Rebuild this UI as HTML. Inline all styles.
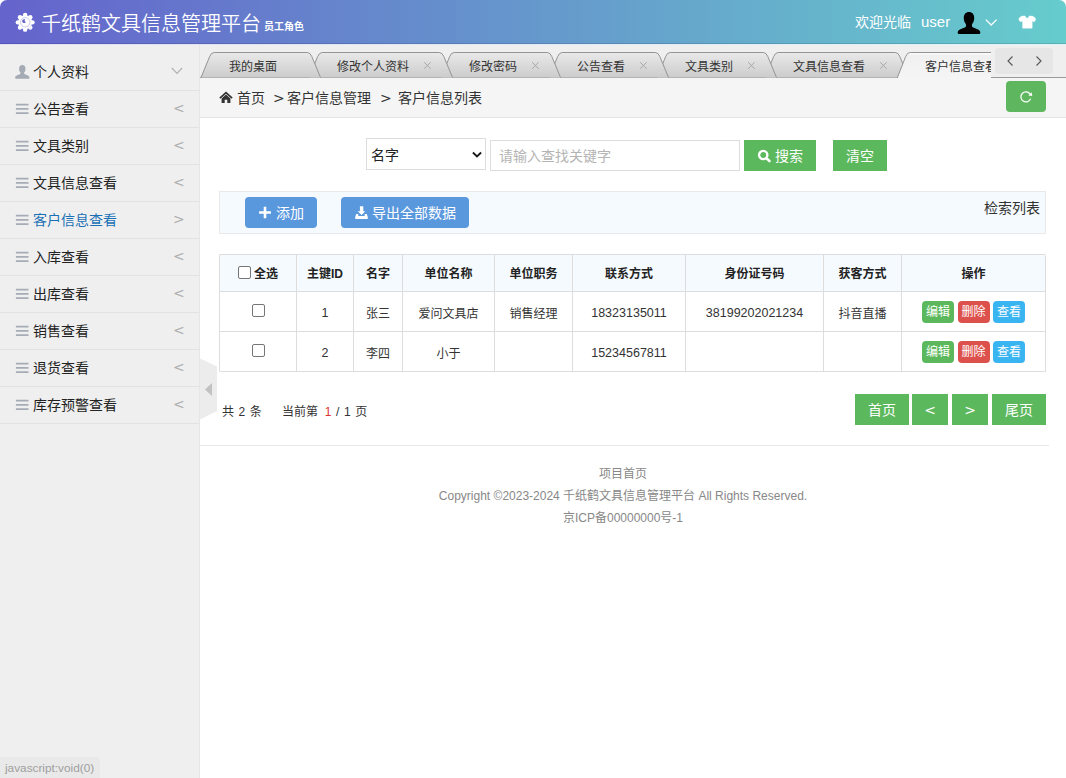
<!DOCTYPE html>
<html lang="zh-CN">
<head>
<meta charset="utf-8">
<title>千纸鹤文具信息管理平台</title>
<style>
*{box-sizing:border-box;margin:0;padding:0}
html,body{width:1066px;height:778px;overflow:hidden;background:#fff}
body{font-family:"Liberation Sans","Noto Sans CJK SC",sans-serif;font-size:14px;color:#333;position:relative}
a{text-decoration:none;color:inherit}
.abs{position:absolute}

/* ---------- header ---------- */
#hd{position:absolute;left:0;top:0;width:1066px;height:44px;border-radius:7px 7px 0 0;box-shadow:inset 0 -1px 0 rgba(0,0,40,0.13);
 background:linear-gradient(90deg,#6563cc 0%,#66cccc 100%)}
#hd .logo{position:absolute;left:41px;top:9px;font-size:20px;line-height:30px;color:#fff;font-weight:350;white-space:nowrap}
#hd .role{position:absolute;left:264px;top:20px;font-size:10px;line-height:14px;color:#fff;font-weight:700;white-space:nowrap}
#hd .wel{position:absolute;left:855px;top:12px;font-size:14px;line-height:20px;color:#fff;white-space:nowrap}
#hd .usr{position:absolute;left:921px;top:12px;font-size:15px;line-height:20px;color:#fff;white-space:nowrap}
#hdline{position:absolute;left:0;top:44px;width:1066px;height:1px;background:linear-gradient(90deg,#e0e0f5 0%,#e0e3f5 25%,#e0eaf5 50%,#e0eff5 75%,#e0f5f5 100%)}

/* ---------- sidebar ---------- */
#side{position:absolute;left:0;top:45px;width:200px;height:733px;background:#efefef;border-right:1px solid #e6e6e6}
#side .it{position:absolute;left:0;width:199px;height:37px;border-bottom:1px solid #e2e2e2;font-size:14px;line-height:20px;color:#222}
#side .it span.t{position:absolute;left:33px;top:8px;white-space:nowrap}
#side .it.on span.t{color:#1a6fb5}
#side .it .ar{position:absolute;left:173px;top:7px;font-size:14px;color:#adadad;font-family:"DejaVu Sans",sans-serif;line-height:20px}
#side .it .bars{position:absolute;left:16px;top:13px;width:12px;height:10px}
#side .it .bars i{display:block;height:2px;background:#a9aeb5;margin-bottom:2px;width:12px}

/* ---------- tabs ---------- */
#tabs{position:absolute;left:200px;top:45px;width:866px;height:33px;background:#efefef}
#tabline{position:absolute;left:200px;top:77px;width:866px;height:1px;background:#9a9a9a}

/* ---------- breadcrumb ---------- */
#bc{position:absolute;left:200px;top:78px;width:866px;height:40px;background:#f5f5f5;border-bottom:1px solid #e5e5e5}
#bc .tx{position:absolute;top:10px;font-size:14px;line-height:20px;color:#333;white-space:nowrap}

.gbtn{position:absolute;background:#5cb85c;color:#fff;font-size:14px;text-align:center;white-space:nowrap}
.bbtn{position:absolute;background:#5a98de;color:#fff;font-size:14px;border-radius:4px;white-space:nowrap}

/* ---------- table ---------- */
#tb{position:absolute;left:219px;top:254px;width:827px;border-collapse:separate;border-spacing:0;table-layout:fixed;font-size:12px;color:#333;border-left:1px solid #ddd;border-top:1px solid #ddd}
#tb th,#tb td{border-right:1px solid #ddd;border-bottom:1px solid #ddd;text-align:center;vertical-align:middle;padding:0;white-space:nowrap}
#tb th{height:37px;background:#f5fafe;font-weight:700;color:#222}
#tb td{height:40px}
.ob{display:inline-block;width:32px;height:22px;line-height:22px;padding:0;font-size:12px;color:#fff;border-radius:4px;margin:0 1.75px;vertical-align:middle;text-align:center;position:relative;top:-0.5px}
.cb{display:inline-block;width:13px;height:13px;border:1px solid #767676;border-radius:2px;background:#fff;vertical-align:middle}

.ft{position:absolute;left:200px;width:846px;text-align:center;font-size:12px;color:#888;line-height:16px;white-space:nowrap}

.tt{position:absolute;top:58px;font-size:12px;line-height:18px;color:#333;white-space:nowrap}
.tx2{position:absolute;top:56px;font-size:15px;line-height:18px;color:#aaa;font-family:"Liberation Sans",sans-serif}
#navbox{position:absolute;left:995px;top:48px;width:58px;height:26px;background:#e6e6e6;border-radius:4px}
#bc .gt{font-family:"DejaVu Sans",sans-serif;font-size:14px}
#tb td.n{font-size:12.5px;padding-top:2px}
#tb td{padding-top:1px}
#tb th{padding-top:0;padding-bottom:1px}
#tb{border-radius:1.5px}
#tb tr.h th:first-child{border-top-left-radius:1.5px}
#tb tr.h th:last-child{border-top-right-radius:1.5px}
#tb tr:last-child td:first-child{border-bottom-left-radius:1.5px}
#tb tr:last-child td:last-child{border-bottom-right-radius:1.5px}
</style>
</head>
<body>

<!-- header -->
<div id="hd">
<svg class="abs" style="left:0;top:0" width="60" height="44" viewBox="0 0 60 44">
<circle cx="25.15" cy="22.35" r="7" fill="#fff"/><circle cx="25.15" cy="15.05" r="2.2" fill="#fff"/><circle cx="30.31" cy="17.19" r="2.2" fill="#fff"/><circle cx="32.45" cy="22.35" r="2.2" fill="#fff"/><circle cx="30.31" cy="27.51" r="2.2" fill="#fff"/><circle cx="25.15" cy="29.65" r="2.2" fill="#fff"/><circle cx="19.99" cy="27.51" r="2.2" fill="#fff"/><circle cx="17.85" cy="22.35" r="2.2" fill="#fff"/><circle cx="19.99" cy="17.19" r="2.2" fill="#fff"/>
<circle cx="25.25" cy="22.3" r="4.7" fill="none" stroke="#7b78cf" stroke-width="0.55" opacity="0.7"/>
<path d="M28.2,26.1 L31.6,29.4 M29.7,24.3 L33,27.5" stroke="#7b78cf" stroke-width="0.45" opacity="0.5" fill="none"/>
<path d="M22.2,20.4 Q23.2,18.9 25.2,19.4 L24.6,21 L25.8,22.4 Q24.2,23.5 22.7,22.4 Q22,21.5 22.2,20.4 Z" fill="#6563cc"/>
</svg>
<svg class="abs" style="left:955px;top:9px" width="28" height="28" viewBox="0 0 28 28"><path d="M14,3 C17.2,3 19.2,5.4 19.2,8.8 C19.2,11.4 18.4,13.8 17.2,15 C16.8,15.6 16.8,17.4 17.4,18 C18.6,19.2 24,20 25,22.2 C25.6,23.4 25.4,25 24.2,25 L3.8,25 C2.6,25 2.4,23.4 3,22.2 C4,20 9.4,19.2 10.6,18 C11.2,17.4 11.2,15.6 10.8,15 C9.6,13.8 8.8,11.4 8.8,8.8 C8.8,5.4 10.8,3 14,3 Z" fill="#000"/></svg>
<svg class="abs" style="left:984px;top:16.6px" width="14" height="10" viewBox="0 0 14 10"><path d="M1.8,2.6 L7.2,8 L12.6,2.6" fill="none" stroke="#fff" stroke-width="1.3"/></svg>
<svg class="abs" style="left:1018px;top:15px" width="19" height="14" viewBox="0 0 19 14"><path d="M7,0.9 Q9.1,5.5 11.3,0.9 L14.3,1.1 Q16.8,1.8 17.8,4.2 L16.3,6.9 L14.2,5.9 V13.2 H4.6 V5.9 L2.5,6.9 L0.6,4.2 Q1.6,1.8 4.1,1.1 Z" fill="#fff" stroke="#fff" stroke-width="0.4" stroke-linejoin="round"/></svg>
  <div class="logo">千纸鹤文具信息管理平台</div>
  <div class="role">员工角色</div>
  <div class="wel">欢迎光临</div>
  <div class="usr">user</div>
</div>
<div id="hdline"></div>

<!-- sidebar -->
<div id="side">
  <div class="it" style="top:9px"><svg class="abs" style="left:14px;top:9px" width="16.6" height="16.6" viewBox="0 0 16 16"><path d="M8,2 C10,2 11.1,3.5 11.1,5.5 C11.1,7 10.6,8.3 9.9,9 C9.6,9.4 9.7,10.2 10.1,10.5 C10.9,11.1 14,11.6 14.7,13 C15,13.8 14.9,15.2 14.3,15.2 L1.7,15.2 C1.1,15.2 1,13.8 1.3,13 C2,11.6 5.1,11.1 5.9,10.5 C6.3,10.2 6.4,9.4 6.1,9 C5.4,8.3 4.9,7 4.9,5.5 C4.9,3.5 6,2 8,2 Z" fill="#a5abb4"/></svg><svg class="abs" style="left:170px;top:12px" width="14" height="10" viewBox="0 0 14 10"><path d="M1.9,2 L7,7.4 L12.1,2" fill="none" stroke="#b2b2b2" stroke-width="1.15"/></svg><span class="t" style="top:8px">个人资料</span></div>
  <div class="it" style="top:46px"><svg class="abs" style="left:15px;top:12px" width="15" height="12" viewBox="0 0 15 12"><path d="M0.9,1.7 H13.5 M0.9,5.95 H13.5 M0.9,10.2 H13.5" stroke="#a6acb6" stroke-width="1.8" fill="none"/></svg><span class="t">公告查看</span><span class="ar">&lt;</span></div>
  <div class="it" style="top:83px"><svg class="abs" style="left:15px;top:12px" width="15" height="12" viewBox="0 0 15 12"><path d="M0.9,1.7 H13.5 M0.9,5.95 H13.5 M0.9,10.2 H13.5" stroke="#a6acb6" stroke-width="1.8" fill="none"/></svg><span class="t">文具类别</span><span class="ar">&lt;</span></div>
  <div class="it" style="top:120px"><svg class="abs" style="left:15px;top:12px" width="15" height="12" viewBox="0 0 15 12"><path d="M0.9,1.7 H13.5 M0.9,5.95 H13.5 M0.9,10.2 H13.5" stroke="#a6acb6" stroke-width="1.8" fill="none"/></svg><span class="t">文具信息查看</span><span class="ar">&lt;</span></div>
  <div class="it on" style="top:157px"><svg class="abs" style="left:15px;top:12px" width="15" height="12" viewBox="0 0 15 12"><path d="M0.9,1.7 H13.5 M0.9,5.95 H13.5 M0.9,10.2 H13.5" stroke="#a6acb6" stroke-width="1.8" fill="none"/></svg><span class="t">客户信息查看</span><span class="ar">&gt;</span></div>
  <div class="it" style="top:194px"><svg class="abs" style="left:15px;top:12px" width="15" height="12" viewBox="0 0 15 12"><path d="M0.9,1.7 H13.5 M0.9,5.95 H13.5 M0.9,10.2 H13.5" stroke="#a6acb6" stroke-width="1.8" fill="none"/></svg><span class="t">入库查看</span><span class="ar">&lt;</span></div>
  <div class="it" style="top:231px"><svg class="abs" style="left:15px;top:12px" width="15" height="12" viewBox="0 0 15 12"><path d="M0.9,1.7 H13.5 M0.9,5.95 H13.5 M0.9,10.2 H13.5" stroke="#a6acb6" stroke-width="1.8" fill="none"/></svg><span class="t">出库查看</span><span class="ar">&lt;</span></div>
  <div class="it" style="top:268px"><svg class="abs" style="left:15px;top:12px" width="15" height="12" viewBox="0 0 15 12"><path d="M0.9,1.7 H13.5 M0.9,5.95 H13.5 M0.9,10.2 H13.5" stroke="#a6acb6" stroke-width="1.8" fill="none"/></svg><span class="t">销售查看</span><span class="ar">&lt;</span></div>
  <div class="it" style="top:305px"><svg class="abs" style="left:15px;top:12px" width="15" height="12" viewBox="0 0 15 12"><path d="M0.9,1.7 H13.5 M0.9,5.95 H13.5 M0.9,10.2 H13.5" stroke="#a6acb6" stroke-width="1.8" fill="none"/></svg><span class="t">退货查看</span><span class="ar">&lt;</span></div>
  <div class="it" style="top:342px"><svg class="abs" style="left:15px;top:12px" width="15" height="12" viewBox="0 0 15 12"><path d="M0.9,1.7 H13.5 M0.9,5.95 H13.5 M0.9,10.2 H13.5" stroke="#a6acb6" stroke-width="1.8" fill="none"/></svg><span class="t">库存预警查看</span><span class="ar">&lt;</span></div>
</div>

<!-- tabs -->
<div id="tabs"></div>
<div id="tabline"></div>
<div id="tabclip" style="position:absolute;left:0;top:0;width:991px;height:79px;overflow:hidden">
<svg id="tabsvg" width="791" height="34" viewBox="200 44 791 34" style="position:absolute;left:200px;top:44px;overflow:hidden">
<defs><linearGradient id="tg" x1="0" y1="0" x2="0" y2="1"><stop offset="0" stop-color="#e9e9e9"/><stop offset="1" stop-color="#cccccc"/></linearGradient><linearGradient id="ta" x1="0" y1="0" x2="0" y2="1"><stop offset="0" stop-color="#ffffff"/><stop offset="0.12" stop-color="#f0f0f0"/><stop offset="1" stop-color="#f5f5f5"/></linearGradient></defs>

<path d="M765,77.5 L773.6,56.7 Q775.2,52.5 778.2,52.5 L895.3,52.5 Q898.3,52.5 899.9,56.7 L908.5,77.5" fill="url(#tg)" stroke="#949494" stroke-width="1"/>
<path d="M657,77.5 L665.6,56.7 Q667.2,52.5 670.2,52.5 L763.3,52.5 Q766.3,52.5 767.9,56.7 L776.5,77.5" fill="url(#tg)" stroke="#949494" stroke-width="1"/>
<path d="M549,77.5 L557.6,56.7 Q559.2,52.5 562.2,52.5 L655.3,52.5 Q658.3,52.5 659.9,56.7 L668.5,77.5" fill="url(#tg)" stroke="#949494" stroke-width="1"/>
<path d="M441,77.5 L449.6,56.7 Q451.2,52.5 454.2,52.5 L547.3,52.5 Q550.3,52.5 551.9,56.7 L560.5,77.5" fill="url(#tg)" stroke="#949494" stroke-width="1"/>
<path d="M309,77.5 L317.6,56.7 Q319.2,52.5 322.2,52.5 L439.3,52.5 Q442.3,52.5 443.9,56.7 L452.5,77.5" fill="url(#tg)" stroke="#949494" stroke-width="1"/>
<path d="M201,77.5 L209.6,56.7 Q211.2,52.5 214.2,52.5 L307.3,52.5 Q310.3,52.5 311.9,56.7 L320.5,77.5" fill="url(#tg)" stroke="#949494" stroke-width="1"/>
<path d="M897,78.5 L905.6,56.7 Q907.2,52.5 910.2,52.5 L1027.3,52.5 Q1030.3,52.5 1031.9,56.7 L1040.5,78.5" fill="url(#ta)" stroke="#949494" stroke-width="1"/>
</svg>
<div class="tt" style="left:229px">我的桌面</div>
<div class="tt" style="left:337px">修改个人资料</div>
<svg class="abs" style="left:422px;top:60px" width="12" height="12" viewBox="0 0 12 12"><path d="M2.2,2.2 L8.6,8.8 M8.6,2.2 L2.2,8.8" stroke="#a8a8a8" stroke-width="1" fill="none"/></svg>
<div class="tt" style="left:469px">修改密码</div>
<svg class="abs" style="left:530px;top:60px" width="12" height="12" viewBox="0 0 12 12"><path d="M2.2,2.2 L8.6,8.8 M8.6,2.2 L2.2,8.8" stroke="#a8a8a8" stroke-width="1" fill="none"/></svg>
<div class="tt" style="left:577px">公告查看</div>
<svg class="abs" style="left:638px;top:60px" width="12" height="12" viewBox="0 0 12 12"><path d="M2.2,2.2 L8.6,8.8 M8.6,2.2 L2.2,8.8" stroke="#a8a8a8" stroke-width="1" fill="none"/></svg>
<div class="tt" style="left:685px">文具类别</div>
<svg class="abs" style="left:746px;top:60px" width="12" height="12" viewBox="0 0 12 12"><path d="M2.2,2.2 L8.6,8.8 M8.6,2.2 L2.2,8.8" stroke="#a8a8a8" stroke-width="1" fill="none"/></svg>
<div class="tt" style="left:793px">文具信息查看</div>
<svg class="abs" style="left:878px;top:60px" width="12" height="12" viewBox="0 0 12 12"><path d="M2.2,2.2 L8.6,8.8 M8.6,2.2 L2.2,8.8" stroke="#a8a8a8" stroke-width="1" fill="none"/></svg>
<div class="tt" style="left:925px">客户信息查看</div>
</div>
<div id="navbox">
  <svg width="58" height="26" viewBox="0 0 58 26" style="position:absolute;left:0;top:0"><path d="M17.5,8.5 L13,13 L17.5,17.5" fill="none" stroke="#555" stroke-width="1.1"/><path d="M41.5,8.5 L46,13 L41.5,17.5" fill="none" stroke="#555" stroke-width="1.1"/></svg>
</div>

<!-- breadcrumb -->
<div id="bc">
<svg class="abs" style="left:18px;top:12.2px" width="16" height="14" viewBox="0 0 16 14"><path d="M1.9,8.2 L8,2.6 L14.1,8.2" fill="none" stroke="#333" stroke-width="1.7" stroke-linejoin="miter"/><path d="M3.6,8.4 L8,4.6 L12.4,8.4 V13 H9.3 V9.8 H6.7 V13 H3.6 Z" fill="#333"/></svg>
  <div class="tx" style="left:37px">首页</div>
  <div class="tx gt" style="left:73px">&gt;</div>
  <div class="tx" style="left:87px">客户信息管理</div>
  <div class="tx gt" style="left:180px">&gt;</div>
  <div class="tx" style="left:198px">客户信息列表</div>
</div>


<!-- refresh btn -->
<div class="abs" style="left:1006px;top:81px;width:40px;height:31px;background:#5eb75e;border-radius:4px">
  <svg width="40" height="31" viewBox="0 0 40 31" style="position:absolute;left:0;top:0"><path d="M24.2,13.3 A5,5 0 1 0 24.6,17.6" fill="none" stroke="#fff" stroke-width="1.2"/><path d="M22.3,14.6 L26.3,14.9 L25.6,11.2 Z" fill="#fff"/></svg>
</div>

<!-- search row -->
<div class="abs" style="left:366px;top:138px;width:120px;height:32px;border:1px solid #ddd;background:#fff">
  <div class="abs" style="left:4px;top:6px;font-size:14px;line-height:20px;color:#222">名字</div>
  <svg class="abs" style="left:104px;top:11.6px" width="12" height="8" viewBox="0 0 12 8"><path d="M1.9,1.5 L6,5.4 L10.1,1.5" fill="none" stroke="#1a1a1a" stroke-width="1.9"/></svg>
</div>
<div class="abs" style="left:490px;top:140px;width:250px;height:31px;border:1px solid #ddd;background:#fff">
  <div class="abs" style="left:8px;top:5px;font-size:14px;line-height:20px;color:#b4b4b4;white-space:nowrap">请输入查找关键字</div>
</div>
<div class="gbtn" style="left:744px;top:140px;width:72px;height:31px">
  <svg class="abs" style="left:13px;top:9px" width="14" height="14" viewBox="0 0 14 14"><circle cx="6.2" cy="6" r="4.15" fill="none" stroke="#fff" stroke-width="2.4"/><path d="M9.6,9.4 L12.4,12" stroke="#fff" stroke-width="2.6" stroke-linecap="round"/></svg>
  <div class="abs" style="left:31px;top:6px;line-height:20px">搜索</div>
</div>
<div class="gbtn" style="left:833px;top:140px;width:54px;height:31px;line-height:33px">清空</div>

<!-- toolbar -->
<div class="abs" style="left:219px;top:191px;width:827px;height:43px;background:#f5fafe;border:1px solid #e9e9e9"></div>
<div class="bbtn" style="left:245px;top:197px;width:72px;height:31px">
  <svg class="abs" style="left:13px;top:9px" width="14" height="14" viewBox="0 0 14 14"><path d="M7,0.7 V12.3 M1.1,6.5 H12.9" stroke="#fff" stroke-width="2.6" fill="none"/></svg>
  <div class="abs" style="left:31px;top:6px;line-height:20px">添加</div>
</div>
<div class="bbtn" style="left:341px;top:197px;width:128px;height:31px">
  <svg class="abs" style="left:13px;top:8px" width="15" height="15" viewBox="0 0 15 15"><path d="M5.9,1.6 Q5.9,1.2 6.3,1.2 H8.9 Q9.3,1.2 9.3,1.6 V6.2 H11.3 L7.6,10 L3.7,6.2 H5.9 Z" fill="#fff"/><path d="M2.2,9 H4.2 L4.4,11 H10.6 L10.8,9 H12.8 L13.9,12.6 Q14,14.1 13,14.1 H2 Q1,14.1 1.1,12.6 Z" fill="#fff"/></svg>
  <div class="abs" style="left:31px;top:6px;line-height:20px">导出全部数据</div>
</div>
<div class="abs" style="left:984px;top:198px;font-size:14px;line-height:20px;color:#333;white-space:nowrap">检索列表</div>

<!-- table -->
<table id="tb" cellspacing="0" cellpadding="0">
<colgroup><col style="width:77px"><col style="width:57px"><col style="width:49px"><col style="width:92px"><col style="width:78px"><col style="width:113px"><col style="width:138px"><col style="width:78px"><col style="width:144px"></colgroup>
<tr class="h"><th><span class="cb" style="margin-right:3px;position:relative;top:-2px"></span>全选</th><th>主键ID</th><th>名字</th><th>单位名称</th><th>单位职务</th><th>联系方式</th><th>身份证号码</th><th>获客方式</th><th>操作</th></tr>
<tr><td><span class="cb" style="position:relative;top:-2px"></span></td><td class="n">1</td><td>张三</td><td>爱问文具店</td><td>销售经理</td><td class="n">18323135011</td><td class="n">38199202021234</td><td>抖音直播</td><td><span class="ob" style="background:#5cb85c">编辑</span><span class="ob" style="background:#dd514c">删除</span><span class="ob" style="background:#3bb4f2">查看</span></td></tr>
<tr><td><span class="cb" style="position:relative;top:-2px"></span></td><td class="n">2</td><td>李四</td><td>小于</td><td></td><td class="n">15234567811</td><td></td><td></td><td><span class="ob" style="background:#5cb85c">编辑</span><span class="ob" style="background:#dd514c">删除</span><span class="ob" style="background:#3bb4f2">查看</span></td></tr>
</table>

<!-- pagination -->
<div class="abs" style="left:222px;top:402px;font-size:12px;line-height:20px;color:#333;white-space:nowrap;word-spacing:1.2px">共 2 条</div>
<div class="abs" style="left:282px;top:402px;font-size:12px;line-height:20px;color:#333;white-space:nowrap">当前第&nbsp; <span style="color:#dd3333">1</span><span style="word-spacing:1.3px"> / 1 页</span></div>
<div class="gbtn" style="left:855px;top:394px;width:54px;height:31px;line-height:33px">首页</div>
<div class="gbtn" style="left:912px;top:394px;width:36px;height:31px;line-height:33px;font-family:'DejaVu Sans',sans-serif">&lt;</div>
<div class="gbtn" style="left:952px;top:394px;width:36px;height:31px;line-height:33px;font-family:'DejaVu Sans',sans-serif">&gt;</div>
<div class="gbtn" style="left:992px;top:394px;width:54px;height:31px;line-height:33px">尾页</div>

<div class="abs" style="left:200px;top:445px;width:849px;height:1px;background:#e8e8e8"></div>

<!-- collapse handle -->
<svg class="abs" style="left:200px;top:358px" width="18" height="62" viewBox="0 0 18 62"><path d="M0,0.5 L17,8.5 V53 L0,61.5 Z" fill="#ececec"/><path d="M12,25 V38 L5,31.5 Z" fill="#c2c2c2"/></svg>

<!-- status -->
<div class="abs" style="left:0;top:757px;width:100px;height:21px;background:#e9e9e9;border-radius:0 4px 0 0;font-size:11.8px;line-height:23px;color:#9e9e9e;padding-left:5px;white-space:nowrap;font-family:'Liberation Sans',sans-serif">javascript:void(0)</div>

<!-- footer -->
<div class="ft" style="top:466px">项目首页</div>
<div class="ft" style="top:488px">Copyright ©2023-2024 千纸鹤文具信息管理平台 All Rights Reserved.</div>
<div class="ft" style="top:510px">京ICP备00000000号-1</div>

</body>
</html>
